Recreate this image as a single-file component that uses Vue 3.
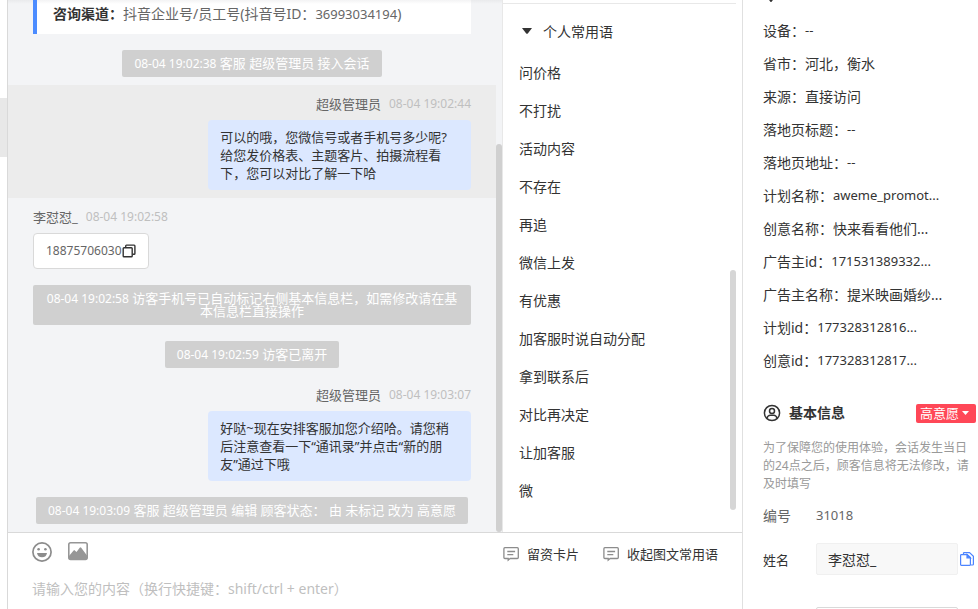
<script setup>
import { ref } from 'vue'

const draft = ref('')
const visitorName = ref('李怼怼_')
const intent = ref('高意愿')
const expanded = ref(true)

const feed = [
  { type: 'notice', time: '08-04 19:02:38', text: '客服 超级管理员 接入会话' },
  { type: 'agent', name: '超级管理员', time: '08-04 19:02:44', active: true, text: '可以的哦，您微信号或者手机号多少呢?\n给您发价格表、主题客片、拍摄流程看下，您可以对比了解一下哈' },
  { type: 'visitor', name: '李怼怼_', time: '08-04 19:02:58', text: '18875706030' },
  { type: 'notice', time: '08-04 19:02:58', text: '访客手机号已自动标记右侧基本信息栏，如需修改请在基本信息栏直接操作' },
  { type: 'notice', time: '08-04 19:02:59', text: '访客已离开' },
  { type: 'agent', name: '超级管理员', time: '08-04 19:03:07', text: '好哒~现在安排客服加您介绍哈。请您稍后注意查看一下“通讯录”并点击“新的朋友”通过下哦' },
  { type: 'notice', time: '08-04 19:03:09', text: '客服 超级管理员 编辑 顾客状态： 由 未标记 改为 高意愿' },
]

const phrases = ['问价格', '不打扰', '活动内容', '不存在', '再追', '微信上发', '有优惠', '加客服时说自动分配', '拿到联系后', '对比再决定', '让加客服', '微']

const visit = [
  { label: '设备', value: '--' },
  { label: '省市', value: '河北，衡水' },
  { label: '来源', value: '直接访问' },
  { label: '落地页标题', value: '--' },
  { label: '落地页地址', value: '--' },
  { label: '计划名称', value: 'aweme_promot...' },
  { label: '创意名称', value: '快来看看他们...' },
  { label: '广告主id', value: '171531389332...' },
  { label: '广告主名称', value: '提米映画婚纱...' },
  { label: '计划id', value: '177328312816...' },
  { label: '创意id', value: '177328312817...' },
]
const isLatin = (s) => /^[\x20-\x7e]+$/.test(s)
</script>

<template>
  <div class="page">
    <aside class="rail"><div class="rail-item"></div></aside>

    <main class="work">
      <div class="panes">
        <section class="chat" aria-label="会话">
          <div class="feed">
            <div class="channel">
              <b>咨询渠道：</b>抖音企业号/员工号(抖音号ID：<span class="num">36993034194</span>)
            </div>
            <template v-for="(m, i) in feed" :key="i">
              <div v-if="m.type === 'notice'" class="notice-row">
                <p class="notice"><span class="stamp">{{ m.time }}</span> {{ m.text }}</p>
              </div>
              <article v-else class="message" :class="[m.type, { active: m.active }]">
                <header class="who">
                  <span class="name">{{ m.name }}</span>
                  <time class="stamp">{{ m.time }}</time>
                </header>
                <p v-if="m.type === 'agent'" class="bubble">{{ m.text }}</p>
                <div v-else class="bubble phone">
                  <span class="stamp">{{ m.text }}</span>
                  <button type="button" class="plain" aria-label="复制">
                    <svg width="14" height="14" viewBox="0 0 14 14" fill="none" stroke="#333" stroke-width="1.4">
                      <rect x="1.2" y="3.7" width="9" height="9" rx="0.8" />
                      <path d="M3.7 3.5V1.9q0-.8.8-.8h7.6q.8 0 .8.8v7.6q0 .8-.8.8h-1.6" />
                    </svg>
                  </button>
                </div>
              </article>
            </template>
          </div>
          <div class="track"><div class="thumb chat-thumb"></div></div>
        </section>

        <section class="phrases" aria-label="常用语">
          <div class="phrase-body">
            <button type="button" class="group" :aria-expanded="expanded" @click="expanded = !expanded">
              <svg width="10" height="6" viewBox="0 0 10 6"><path d="M0 0h10L6 5.2q-1 1-2 0z" fill="#333" /></svg>
              个人常用语
            </button>
            <ul v-show="expanded">
              <li v-for="p in phrases" :key="p">{{ p }}</li>
            </ul>
          </div>
          <div class="track phrase-track"><div class="thumb phrase-thumb"></div></div>
        </section>
      </div>

      <footer class="composer">
        <div class="tools">
          <button type="button" class="plain" aria-label="表情">
            <svg width="20" height="20" viewBox="0 0 20 20">
              <circle cx="10" cy="10" r="9.1" fill="none" stroke="#8c8c8c" stroke-width="1.7" />
              <circle cx="6.6" cy="7.2" r="1.3" fill="#8c8c8c" />
              <circle cx="13.4" cy="7.2" r="1.3" fill="#8c8c8c" />
              <path d="M5 11h10q-.6 4.2-5 4.2T5 11z" fill="#8c8c8c" />
            </svg>
          </button>
          <button type="button" class="plain" aria-label="图片">
            <svg width="20" height="20" viewBox="0 0 20 20">
              <rect x="0.8" y="0.8" width="18.4" height="16.600" rx="1.8" fill="none" stroke="#969696" stroke-width="1.6" />
              <path d="M1 14l4.600-5.500q.6-.7 1.200-.1l1.700 1.700 3.200-4.300q.8-1 1.500 0L19 13.500V17H1z" fill="#969696" />
            </svg>
          </button>
          <div class="actions">
            <button v-for="a in ['留资卡片', '收起图文常用语']" :key="a" type="button" class="plain action">
              <svg width="16" height="16" viewBox="0 0 16 16" fill="none" stroke="#8c8c8c" stroke-width="1.3">
                <path d="M1.900 1.700h12.400q1 0 1 1v8.800q0 1-1 1H7.200l-2 1.600v-1.600H1.900q-1 0-1-1V2.700q0-1 1-1z" />
                <path d="M4.300 5.500h7.800M4.300 8.700h6" />
              </svg>
              {{ a }}
            </button>
          </div>
        </div>
        <textarea v-model="draft" rows="1" aria-label="消息内容" placeholder="请输入您的内容（换行快捷键：shift/ctrl + enter）"></textarea>
      </footer>
    </main>

    <aside class="info">
      <div class="section-top">
        <svg width="16" height="16" viewBox="0 0 16 16"><path d="M8 16.500L3 10a6.200 6.200 0 1 1 10 0z" fill="#333" /></svg>
      </div>
      <dl class="visit">
        <div v-for="v in visit" :key="v.label">
          <dt>{{ v.label }}：</dt>
          <dd :class="{ num: isLatin(v.value) }">{{ v.value }}</dd>
        </div>
      </dl>

      <div class="basic-head">
        <svg width="18" height="18" viewBox="0 0 18 18" fill="none" stroke="#333" stroke-width="1.500">
          <circle cx="9" cy="9" r="7.600" />
          <circle cx="9" cy="6.900" r="2.500" />
          <path d="M3.900 14.200q1-3 3.300-3h3.600q2.300 0 3.300 3" />
        </svg>
        <h2>基本信息</h2>
        <div class="intent">
          <select v-model="intent" aria-label="顾客状态">
            <option>高意愿</option>
            <option>未标记</option>
          </select>
          <svg width="7" height="4" viewBox="0 0 7 4"><path d="M0 0h7L3.500 4z" fill="#fff" /></svg>
        </div>
      </div>
      <p class="hint">为了保障您的使用体验，会话发生当日的24点之后，顾客信息将无法修改，请及时填写</p>
      <div class="field id-field">
        <span class="label">编号</span>
        <span class="num">31018</span>
      </div>
      <div class="field name-field">
        <label class="label" for="visitor-name">姓名</label>
        <input id="visitor-name" v-model="visitorName" type="text" />
        <button type="button" class="plain" aria-label="复制姓名">
          <svg width="14" height="14" viewBox="0 0 14 14" fill="none" stroke="#4c84ff" stroke-width="1.200">
            <path d="M3.500.6h6l3.900 3.600v8q0 .8-.8.800H10.500" />
            <path d="M3.500.6v1.700M1.400 2.600h5.800l3.200 3v7q0 .8-.8.800H1.400q-.8 0-.8-.8V3.400q0-.8.800-.8z" />
            <path d="M7 2.600v3.200h3.400z" fill="#4c84ff" />
          </svg>
        </button>
      </div>
      <div class="field next-field">
        <span class="label"></span>
        <input type="text" aria-label="电话" class="open" />
      </div>
    </aside>
  </div>
</template>

<style>
body {
  margin: 0;
  overflow: hidden;
}
</style>

<style scoped>
.page,
.page * {
  box-sizing: border-box;
}
.page {
  display: flex;
  height: 100vh;
  overflow: hidden;
  background: #fff;
  color: #333;
  font-family: "Noto Sans", "Noto Sans CJK SC", sans-serif;
  font-size: 14px;
}
p, ul, dl, dd, h2 {
  margin: 0;
  padding: 0;
}
button, input, select, textarea {
  font: inherit;
  color: inherit;
}
svg {
  display: block;
  flex: none;
}
.plain {
  padding: 0;
  border: 0;
  background: none;
}
.num {
  font-size: 13px;
}
.stamp {
  font-size: 12px;
}
.rail {
  flex: none;
  width: 8px;
  padding-top: 98px;
  border-right: 1px solid #d9d9d9;
}
.rail-item {
  height: 59px;
  background: #e8e8e8;
}
.work {
  flex: 1;
  min-width: 0;
  display: flex;
  flex-direction: column;
}
.panes {
  flex: 1;
  min-height: 0;
  display: flex;
}
.chat {
  flex: 1;
  min-width: 0;
  display: flex;
  background: linear-gradient(#e9eaec, #f3f4f6 4px);
}
.feed {
  flex: 1;
  min-width: 0;
  overflow: hidden;
}
.channel {
  height: 34px;
  margin: 0 25px 8px;
  padding: 4px 16px;
  border-left: 4px solid #4c8cff;
  background: linear-gradient(#f3f3f4, #fff 4px);
  color: #666;
  line-height: 20px;
  white-space: nowrap;
}
.channel b {
  color: #333;
}
.notice-row {
  display: flex;
  justify-content: center;
  padding: 8px 25px;
}
.notice {
  padding: 7px 12px;
  border-radius: 2px;
  background: #d0d0d0;
  color: #fff;
  font-size: 13px;
  line-height: 13px;
  text-align: center;
}
.message {
  display: flex;
  flex-direction: column;
  align-items: flex-start;
  gap: 8px;
  padding: 11px 25px 8px;
  font-size: 13px;
}
.agent {
  align-items: flex-end;
}
.active {
  background: #ececec;
}
.who {
  display: flex;
  align-items: center;
  gap: 8px;
  height: 16px;
  line-height: 16px;
  color: #666;
}
.who .stamp {
  color: #bfbfbf;
}
.bubble {
  max-width: 60%;
  padding: 8px 12px;
  border-radius: 4px;
  background: #dce8ff;
  line-height: 18px;
  white-space: pre-line;
}
.phone {
  display: flex;
  align-items: center;
  border: 1px solid #d9d9d9;
  background: #fff;
  color: #666;
}
.track {
  flex: none;
  display: flex;
  flex-direction: column;
  justify-content: flex-end;
  width: 6px;
}
.thumb {
  border-radius: 3px;
  background: #d0d0d0;
}
.chat-thumb {
  height: 73%;
}
.phrases {
  flex: none;
  display: flex;
  width: 240px;
  padding: 3px 6px 0 0;
  border-left: 1px solid #e8e8e8;
}
.phrase-body {
  flex: 1;
  padding: 8px 16px 0;
  border-top: 1px solid #e8e8e8;
}
.phrase-track {
  padding-bottom: 22px;
  border-top: 1px solid #e8e8e8;
}
.phrase-thumb {
  height: 240px;
  background: #d6d6d6;
}
.group {
  display: flex;
  align-items: center;
  gap: 11px;
  height: 38px;
  padding: 0 3px;
  border: 0;
  background: none;
}
.phrases ul {
  margin-top: 4px;
  list-style: none;
}
.phrases li {
  line-height: 38px;
}
.composer {
  flex: none;
  border-top: 1px solid #d9d9d9;
  padding: 7px 24px;
}
.tools {
  display: flex;
  align-items: center;
  gap: 16px;
  height: 24px;
}
.actions {
  display: flex;
  gap: 24px;
  margin-left: auto;
  padding-top: 4px;
}
.action {
  display: flex;
  align-items: center;
  gap: 8px;
  font-size: 13px;
  line-height: 20px;
}
.composer textarea {
  display: block;
  width: 100%;
  height: 20px;
  margin: 15px 0 3px;
  padding: 0;
  border: 0;
  outline: 0;
  resize: none;
  line-height: 20px;
  overflow: hidden;
}
.composer textarea::placeholder {
  color: #bfbfbf;
  opacity: 1;
}
.info {
  flex: none;
  width: 236px;
  padding: 0 2px 0 20px;
  border-left: 1px solid #e0e0e0;
  overflow: hidden;
}
.section-top {
  height: 14px;
  overflow: hidden;
}
.section-top svg {
  margin-top: -14px;
}
.visit div {
  display: flex;
  line-height: 33px;
}
.basic-head {
  display: flex;
  align-items: center;
  height: 20px;
  margin-top: 26px;
}
.basic-head h2 {
  margin-left: 8px;
  font-size: 14px;
  line-height: 20px;
}
.intent {
  position: relative;
  margin-left: auto;
}
.intent select {
  display: block;
  height: 19px;
  padding: 0 16px 0 4px;
  border: 0;
  border-radius: 2px;
  appearance: none;
  background: #ff4757;
  color: #fff;
  font-size: 13px;
  line-height: 19px;
}
.intent svg {
  position: absolute;
  top: 7px;
  right: 7px;
  pointer-events: none;
}
.hint {
  margin-top: 16px;
  color: #999;
  font-size: 12px;
  line-height: 18px;
}
.field {
  display: flex;
  align-items: center;
  height: 32px;
}
.id-field {
  margin: 6px 0 12px;
  color: #666;
}
.label {
  flex: none;
  width: 53px;
}
label.label {
  font-size: 13px;
}
.field input {
  flex: 1;
  min-width: 0;
  height: 32px;
  padding: 0 11px;
  border: 1px solid #f0f0f0;
  border-radius: 2px;
  background: #f8f8f8;
}
.name-field {
  padding-right: 2px;
}
.name-field .plain {
  margin-left: 2px;
}
.next-field {
  margin-top: 32px;
  padding-right: 18px;
}
.field .open {
  border-color: #d9d9d9;
  background: #fff;
}
</style>
